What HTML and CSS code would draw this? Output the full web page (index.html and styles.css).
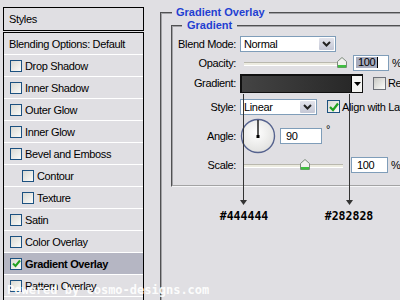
FILE: index.html
```html
<!DOCTYPE html>
<html lang="en">
<head>
    <meta charset="UTF-8">
    <title>Layer Style - Gradient Overlay</title>
    <link rel="stylesheet" href="styles.css">
</head>
<body>
    <div class="page">
        <div class="styles-panel">
            <div class="panel-head">Styles</div>
            <ul class="fx-list">
                <li class="fx fx-blend">Blending Options: Default</li>
                <li class="fx"><span class="cb"></span>Drop Shadow</li>
                <li class="fx"><span class="cb"></span>Inner Shadow</li>
                <li class="fx"><span class="cb"></span>Outer Glow</li>
                <li class="fx"><span class="cb"></span>Inner Glow</li>
                <li class="fx"><span class="cb"></span>Bevel and Emboss</li>
                <li class="fx sub"><span class="cb"></span>Contour</li>
                <li class="fx sub"><span class="cb"></span>Texture</li>
                <li class="fx"><span class="cb"></span>Satin</li>
                <li class="fx"><span class="cb"></span>Color Overlay</li>
                <li class="fx active"><span class="cb"><svg width="9" height="9" viewBox="0 0 9 9"><polyline points="1,4.5 3.5,7 8,1.5" fill="none" stroke="#21a121" stroke-width="2"/></svg></span>Gradient Overlay</li>
                <li class="fx"><span class="cb"></span>Pattern Overlay</li>
                <li class="fx"><span class="cb"></span>Stroke</li>
            </ul>
        </div>

        <div class="options">
            <fieldset class="group outer">
                <legend>Gradient Overlay</legend>
                <fieldset class="group inner">
                    <legend>Gradient</legend>

                    <div class="row r-blend">
                        <span class="lbl">Blend Mode:</span>
                        <div class="select blend-select">
                            <span class="val">Normal</span>
                            <span class="btn"><svg width="9" height="6" viewBox="0 0 9 6"><polyline points="1,1 4.5,4.5 8,1" fill="none" stroke="#222" stroke-width="2"/></svg></span>
                        </div>
                    </div>

                    <div class="row r-opacity">
                        <span class="lbl">Opacity:</span>
                        <div class="slider">
                            <div class="track"></div>
                            <svg class="thumb" style="left:97px" width="10" height="11" viewBox="0 0 10 11"><path d="M0.5 4.5 L5 0.5 L9.5 4.5 L9.5 10.5 L0.5 10.5 Z" fill="#f1f1ee" stroke="#7c8a7c"/><rect x="1" y="8" width="8" height="2.5" fill="#3fbf3f"/></svg>
                        </div>
                        <span class="num num-opacity"><span class="sel">100</span><span class="caret"></span></span>
                        <span class="unit">%</span>
                    </div>

                    <div class="row r-gradient">
                        <span class="lbl">Gradient:</span>
                        <div class="swatch">
                            <span class="fill"></span>
                            <span class="drop"><svg width="7" height="4" viewBox="0 0 7 4"><polygon points="0,0 7,0 3.5,4" fill="#000"/></svg></span>
                        </div>
                        <span class="cb cb-lg cb-rev"></span>
                        <span class="cb-text">Reverse</span>
                    </div>

                    <div class="row r-style">
                        <span class="lbl">Style:</span>
                        <div class="select style-select">
                            <span class="val">Linear</span>
                            <span class="btn"><svg width="9" height="6" viewBox="0 0 9 6"><polyline points="1,1 4.5,4.5 8,1" fill="none" stroke="#222" stroke-width="2"/></svg></span>
                        </div>
                        <span class="cb cb-lg cb-align"><svg width="10" height="10" viewBox="0 0 10 10"><polyline points="1,5 4,8 9,1.5" fill="none" stroke="#21a121" stroke-width="2.2"/></svg></span>
                        <span class="cb-text">Align with Layer</span>
                    </div>

                    <div class="row r-angle">
                        <span class="lbl">Angle:</span>
                        <svg class="dial" width="36" height="36" viewBox="0 0 36 36">
                            <defs>
                                <radialGradient id="dialFill" cx="0.45" cy="0.4" r="0.6">
                                    <stop offset="0" stop-color="#ffffff"/>
                                    <stop offset="1" stop-color="#e2e2e0"/>
                                </radialGradient>
                            </defs>
                            <circle cx="18" cy="18" r="16.5" fill="url(#dialFill)" stroke="#56638f" stroke-width="1.4"/>
                            <line x1="18" y1="18.5" x2="18" y2="2" stroke="#000" stroke-width="1.3"/>
                            <rect x="16.5" y="17" width="3" height="3" fill="#000"/>
                        </svg>
                        <span class="num num-angle">90</span>
                        <span class="deg">°</span>
                    </div>

                    <div class="row r-scale">
                        <span class="lbl">Scale:</span>
                        <div class="slider slider-scale">
                            <div class="track"></div>
                            <svg class="thumb" style="left:60px" width="10" height="11" viewBox="0 0 10 11"><path d="M0.5 4.5 L5 0.5 L9.5 4.5 L9.5 10.5 L0.5 10.5 Z" fill="#f1f1ee" stroke="#7c8a7c"/><rect x="1" y="8" width="8" height="2.5" fill="#3fbf3f"/></svg>
                        </div>
                        <span class="num num-scale">100</span>
                        <span class="unit">%</span>
                    </div>
                </fieldset>

                <div class="hexes">
                    <span class="hex">#444444</span>
                    <span class="hex hex-end">#282828</span>
                </div>
            </fieldset>
        </div>
    </div>

    <!-- arrows from the gradient ends down to their colour codes -->
    <svg class="arrows" width="400" height="300" viewBox="0 0 400 300">
        <line x1="243.5" y1="94" x2="243.5" y2="201" stroke="#333" stroke-width="1"/>
        <polygon points="240,200 247,200 243.5,205" fill="#333"/>
        <line x1="349.5" y1="94" x2="349.5" y2="201" stroke="#333" stroke-width="1"/>
        <polygon points="346,200 353,200 349.5,205" fill="#333"/>
    </svg>

    <div class="watermark">Powered by cosmo-designs.com</div>
</body>
</html>
```

FILE: styles.css
```css
* {
    box-sizing: border-box;
}

body {
    margin: 0;
    width: 400px;
    height: 300px;
    overflow: hidden;
    position: relative;
    background: #e0dfe3;
    font-family: "Liberation Sans", Arial, sans-serif;
    font-size: 11px;
    letter-spacing: -0.35px;
    color: #000;
}

.page {
    display: flex;
    align-items: flex-start;
    padding-left: 3px;
}

/* left: list of effects */
.styles-panel {
    width: 141px;
    flex: none;
    margin-top: 7px;
}

.panel-head {
    height: 24px;
    line-height: 22px;
    border: 1px solid #000;
    padding-left: 5px;
}

.fx-list {
    list-style: none;
    margin: 1px 0 0;
    padding: 0;
    border: 1px solid #000;
    border-bottom: 0;
}

.fx {
    height: 22px;
    border-bottom: 1px solid #fff;
    display: flex;
    align-items: center;
    padding-left: 6px;
}

.fx-blend {
    padding-left: 5px;
}

.fx.sub {
    padding-left: 18px;
}

.fx.active {
    background: #b5b6c3;
    font-weight: bold;
}

.cb {
    width: 12px;
    height: 12px;
    flex: none;
    margin-right: 3px;
    border: 1px solid #1c5180;
    background: linear-gradient(135deg, #d9d9d3, #fbfbf9);
    display: flex;
    align-items: center;
    justify-content: center;
}

/* right: options */
.options {
    margin-left: 16px;
    margin-top: 6px;
}

.group {
    margin: 0;
    padding: 0;
    border: 2px groove #f2f2f2;
    border-color: #a2a2a6 #f6f6f8 #f6f6f8 #a2a2a6;
    border-style: groove;
}

.group legend {
    font-weight: bold;
    color: #1f40d2;
    line-height: 13px;
    letter-spacing: 0;
}

.outer {
    width: 300px;
    height: 320px;
    border-right: 0;
    border-bottom: 0;
}

.outer > legend {
    margin-left: 10px;
    padding: 0 4px;
}

.inner {
    width: 260px;
    margin-left: 9px;
    padding: 2px 0 8px;
    border-right: 0;
}

.inner > legend {
    margin-left: 9px;
    padding: 0 5px;
}

.row {
    display: flex;
    align-items: center;
}

.r-blend { height: 19px; }
.r-opacity { height: 19px; }
.r-gradient { height: 22px; }
.r-style { height: 25px; }
.r-angle { height: 34px; }
.r-scale { height: 24px; }

.lbl {
    width: 63px;
    flex: none;
    text-align: right;
    margin-right: 4px;
}

.select {
    display: flex;
    height: 16px;
    border: 1px solid #7f9db9;
    background: #fff;
}

.select .val {
    flex: 1;
    padding-left: 3px;
    line-height: 14px;
}

.select .btn {
    width: 15px;
    margin: 1px;
    border-radius: 1px;
    background: linear-gradient(#e3e4ec, #c4c7d5);
    display: flex;
    align-items: center;
    justify-content: center;
}

.blend-select {
    width: 96px;
}

.style-select {
    width: 77px;
}

.slider {
    position: relative;
    width: 107px;
    height: 12px;
    flex: none;
}

.track {
    margin: 5px 4px 0;
    height: 4px;
    background: #ecebe0;
    border-top: 1px solid #b9b8ae;
    border-bottom: 1px solid #fff;
}

.thumb {
    position: absolute;
    top: 0;
}

.num {
    height: 16px;
    border: 1px solid #7f9db9;
    background: #fff;
    line-height: 14px;
    display: flex;
    align-items: center;
}

.num-opacity {
    width: 36px;
    margin-left: 6px;
    padding-left: 2px;
}

.num-opacity .sel {
    background: #a8acbe;
    padding: 0 2px;
    line-height: 11px;
}

.caret {
    width: 1px;
    height: 11px;
    background: #000;
}

.num-scale {
    width: 37px;
    margin-left: 4px;
    padding-left: 5px;
}

.num-angle {
    width: 42px;
    margin-left: 4px;
    padding-left: 5px;
}

.unit {
    margin-left: 3px;
}

.deg {
    margin-left: 4px;
    align-self: flex-start;
    margin-top: 4px;
}

.swatch {
    width: 123px;
    height: 19px;
    display: flex;
    border: 2px solid #111;
    border-right-width: 1px;
    border-bottom-width: 1px;
}

.swatch .fill {
    flex: 1;
    background: linear-gradient(to right, #444444, #282828);
}

.swatch .drop {
    width: 11px;
    border-left: 1px solid #000;
    background: #f4f4f2;
    display: flex;
    align-items: center;
    justify-content: center;
}

.cb-lg {
    width: 13px;
    height: 13px;
}

.cb-rev {
    margin-left: 10px;
    margin-right: 2px;
    background: linear-gradient(135deg, #c8c8c4, #fdfdfb);
    border-color: #6d7078;
}

.cb-align {
    margin-left: 10px;
    margin-right: 2px;
}

.cb-text {
    white-space: nowrap;
}

.hexes {
    display: flex;
    margin-top: 23px;
}

.hex {
    width: 60px;
    text-align: center;
    font-family: "DejaVu Sans Mono", "Liberation Mono", monospace;
    font-weight: bold;
    font-size: 11.5px;
    letter-spacing: 0;
    line-height: 13px;
    margin-left: 52px;
}

.hex-end {
    margin-left: 45px;
}

.arrows {
    position: absolute;
    left: 0;
    top: 0;
    pointer-events: none;
}

.watermark {
    position: absolute;
    left: 7px;
    top: 283px;
    font-family: "DejaVu Sans Mono", "Liberation Mono", monospace;
    font-weight: bold;
    font-size: 12px;
    letter-spacing: 0;
    color: rgba(255, 255, 255, 0.92);
    white-space: nowrap;
}
```
